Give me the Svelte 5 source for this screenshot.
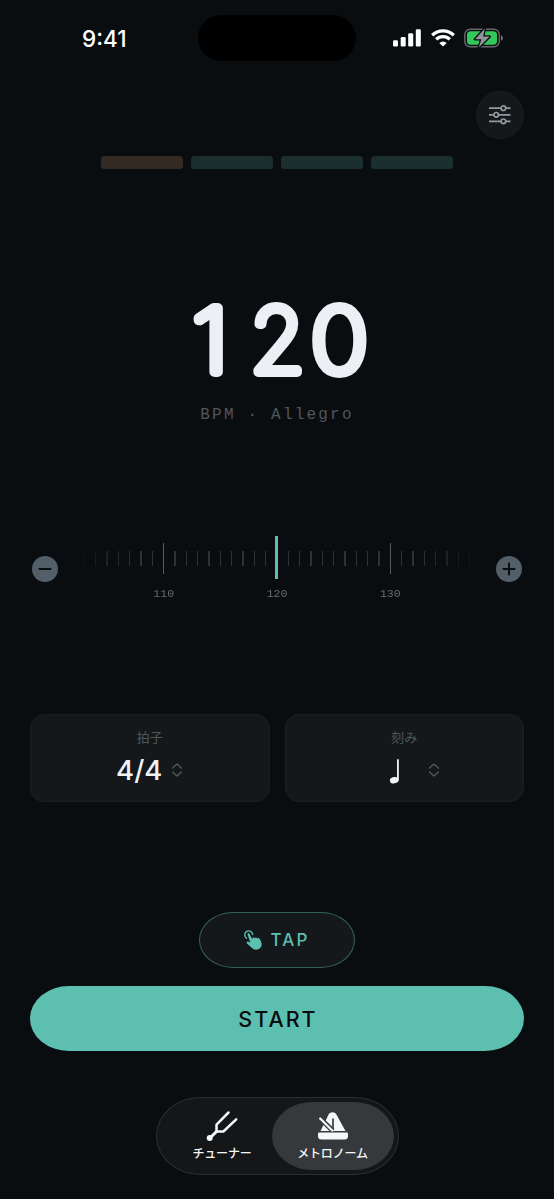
<script lang="ts">
	type TabId = 'tuner' | 'metronome';

	// Metronome state
	let bpm = $state(120);
	let beatsPerBar = $state(4);
	let activeTab = $state<TabId>('metronome');

	const TICK_SPAN = 17;
	const tempoNames = [
		{ max: 60, name: 'Largo' },
		{ max: 76, name: 'Adagio' },
		{ max: 108, name: 'Andante' },
		{ max: 119, name: 'Moderato' },
		{ max: 168, name: 'Allegro' },
		{ max: 400, name: 'Presto' }
	];

	// Digit cells of the tempo readout: left edge and horizontal stretch
	const digitCells = [
		{ x: 12.3, stretch: 1.12 },
		{ x: 70.3, stretch: 1 },
		{ x: 130.8, stretch: 1.1 }
	];

	let tempoName = $derived(tempoNames.find((t) => bpm <= t.max)?.name ?? '');
	let ticks = $derived(Array.from({ length: TICK_SPAN * 2 + 1 }, (_, i) => bpm - TICK_SPAN + i));
	let digits = $derived([...String(bpm).padStart(3, ' ')]);

	function changeBpm(delta: number): void {
		bpm = Math.min(300, Math.max(30, bpm + delta));
	}
</script>

{#snippet chevrons()}
	<svg class="chevrons" viewBox="0 0 12 16" aria-hidden="true">
		<path d="M1.600 6 6 2l4.400 4M1.600 10 6 14l4.400-4" />
	</svg>
{/snippet}

<div class="screen">
	<!-- Status bar -->
	<header class="status-bar">
		<span class="clock">9:41</span>
		<div class="island"></div>
		<div class="status-icons">
			<svg width="28" height="18" viewBox="0 0 28 18" fill="#fff">
				<rect x="0" y="11.200" width="5" height="6.300" rx="1.300" />
				<rect x="7.700" y="8" width="5" height="9.500" rx="1.300" />
				<rect x="15.200" y="4.300" width="5" height="13.200" rx="1.300" />
				<rect x="22.800" y="0.200" width="5" height="17.300" rx="1.300" />
			</svg>
			<svg width="24" height="18" viewBox="0 0 24 18" fill="none" stroke="#fff" stroke-width="3.300">
				<path d="M1.200 6.200a15.400 15.400 0 0 1 21.600 0" />
				<path d="M5.200 10.400a9.700 9.700 0 0 1 13.600 0" />
				<path d="M12 17.500 8.300 13.900a5.300 5.300 0 0 1 7.400 0z" fill="#fff" stroke="none" />
			</svg>
			<svg width="40" height="20" viewBox="0 0 40 20">
				<rect x="0.800" y="1.200" width="34.500" height="17.600" rx="5.500" fill="none" stroke="#66696b" stroke-width="1.400" />
				<path d="M37 7.200c2.500 1 2.500 4.600 0 5.600z" fill="#77797b" />
				<rect x="3" y="3.300" width="30" height="13.400" rx="3.600" fill="#34c759" />
				<path d="M20.800 0.500 11 11.200h6.300L14.800 19.500 25.600 8.600h-6.500z" fill="#919496" stroke="#0a0d10" stroke-width="2.600" paint-order="stroke" stroke-linejoin="round" />
			</svg>
		</div>
	</header>

	<div class="toolbar">
		<button class="settings-btn" aria-label="設定">
			<svg width="24" height="20" viewBox="0 0 24 20" fill="none" stroke="#929a9f" stroke-width="1.700">
				<path d="M1 3.200h12M17.800 3.200h4.700M1 9.800h4.800M10.600 9.800h11.900M1 16.300h12M17.800 16.300h4.700" />
				<circle cx="15.400" cy="3.200" r="2.300" />
				<circle cx="8.200" cy="9.800" r="2.300" />
				<circle cx="15.400" cy="16.300" r="2.300" />
			</svg>
		</button>
	</div>

	<!-- Beat indicator -->
	<div class="beats">
		{#each Array(beatsPerBar) as _, i}
			<div class="beat" class:accent={i === 0}></div>
		{/each}
	</div>

	<!-- Tempo -->
	<section class="tempo">
		<svg class="tempo-value" viewBox="0 0 200 116">
			{#each digits as digit, i}
				<text transform="translate({digitCells[i].x} 90) scale({digitCells[i].stretch} 1)">{digit}</text>
			{/each}
		</svg>
		<p class="tempo-name">BPM · {tempoName}</p>
	</section>

	<!-- Dial -->
	<section class="dial">
		<button class="step-btn" aria-label="−1" onclick={() => changeBpm(-1)}>
			<svg viewBox="0 0 26 26"><path d="M7.500 13h11" /></svg>
		</button>
		<div class="ruler">
			{#each ticks as value}
				<div class="tick" class:major={value % 10 === 0} class:current={value === bpm}>
					<div class="mark"><i></i></div>
					{#if value % 10 === 0}
						<span class="tick-label">{value}</span>
					{/if}
				</div>
			{/each}
		</div>
		<button class="step-btn" aria-label="+1" onclick={() => changeBpm(1)}>
			<svg viewBox="0 0 26 26"><path d="M7.500 13h11M13 7.500v11" /></svg>
		</button>
	</section>

	<!-- Meter and subdivision -->
	<section class="options">
		<button class="option">
			<span class="option-label">拍子</span>
			<span class="option-row">
				<span class="option-value">{beatsPerBar}/4</span>
				{@render chevrons()}
			</span>
		</button>
		<button class="option">
			<span class="option-label">刻み</span>
			<span class="option-row">
				<span class="note">
					<svg width="12" height="26" viewBox="0 0 12 26" fill="#f1f4f6">
						<ellipse cx="5.300" cy="22.200" rx="4.400" ry="3.200" transform="rotate(-10 5.300 22.200)" />
						<rect x="8" y="1.300" width="1.800" height="21" />
					</svg>
				</span>
				{@render chevrons()}
			</span>
		</button>
	</section>

	<!-- Actions -->
	<section class="actions">
		<button class="tap-btn">
			<svg width="18" height="21" viewBox="0 0 18 21" aria-hidden="true">
				<path class="ring" d="M2.500 8.200A4 4 0 1 1 8.700 4.500" />
				<path d="M3.500 4.600c-.5-1.300 1.400-2.100 2-.8l2.600 5.200.5-.2c-.3-1.500 1.300-2 2-.9l.4.700c-.1-1.300 1.500-1.600 2.100-.5l.5.900c0-1.200 1.500-1.300 2-.3l1.500 3.100c1.300 3.300.3 6-2.100 7.100-2.600 1.300-5.400.9-7.300-1.100L3 13.600c-1-1.200.3-2.500 1.600-1.800l1.800.9z" />
			</svg>
			<span>TAP</span>
		</button>
		<button class="start-btn">START</button>
	</section>

	<!-- Tab bar -->
	<nav class="tab-bar">
		<button class="tab" class:active={activeTab === 'tuner'} onclick={() => (activeTab = 'tuner')}>
			<svg width="34" height="32" viewBox="0 0 34 32" fill="none" stroke="#f5f7f8" stroke-width="2.500" stroke-linecap="round" stroke-linejoin="round">
				<path d="M23.500 2.500 11.500 14.700v6.800h6.900L31.200 9.400" />
				<path d="M11.500 21.500 5 28" stroke-width="3" />
				<circle cx="4.700" cy="28" r="2" fill="#f5f7f8" stroke-width="2" />
			</svg>
			<span>チューナー</span>
		</button>
		<button class="tab" class:active={activeTab === 'metronome'} onclick={() => (activeTab = 'metronome')}>
			<svg width="34" height="32" viewBox="0 0 34 32">
				<path d="M4.500 21 12.600 4.500c1.600-3 6.200-3 7.800 0L29.500 21z" fill="#f5f7f8" />
				<path d="M17 9v10.500" stroke="#393c3f" stroke-width="1.700" stroke-linecap="round" />
				<path d="M4.200 8.500 16.500 20.500" stroke="#36393c" stroke-width="5" />
				<path d="m4.200 8.500 12 12" stroke="#f5f7f8" stroke-width="2.300" stroke-linecap="round" />
				<path d="M3.200 22.500h27.600a1.200 1.200 0 0 1 1.200 1.200V26a3.500 3.500 0 0 1-3.500 3.500h-23A3.500 3.500 0 0 1 2 26v-2.300a1.200 1.200 0 0 1 1.200-1.200z" fill="#f5f7f8" />
			</svg>
			<span>メトロノーム</span>
		</button>
	</nav>
</div>

<style>
	:global(body) {
		background: #0a0d10;
	}

	.screen {
		box-sizing: border-box;
		display: flex;
		flex-direction: column;
		height: 1199px;
		padding: 0 30px 24px;
		overflow: hidden;
		background: #0a0d10;
		color: #eff2f5;
		font-family: Inter, 'Noto Sans CJK JP', sans-serif;
	}

	button {
		box-sizing: border-box;
		margin: 0;
		padding: 0;
		border: none;
		background: none;
		color: inherit;
		font: inherit;
		cursor: pointer;
	}

	svg {
		display: block;
		flex: none;
	}

	/* Status bar */
	.status-bar {
		display: grid;
		grid-template-columns: 168px 158px 1fr;
		align-items: center;
		height: 76px;
	}

	.clock {
		padding-left: 52px;
		color: #fff;
		font-size: 22.500px;
		font-weight: 550;
	}

	.island {
		height: 46px;
		border-radius: 23px;
		background: #000;
	}

	.status-icons {
		display: flex;
		align-items: center;
		gap: 9.500px;
		padding-left: 37px;
	}

	/* Toolbar */
	.toolbar {
		display: flex;
		justify-content: flex-end;
		padding-top: 14.500px;
	}

	.settings-btn {
		display: grid;
		place-items: center;
		width: 48px;
		height: 48px;
		border: 1px solid #1a1e21;
		border-radius: 50%;
		background: #14181b;
	}

	/* Beat indicator */
	.beats {
		display: grid;
		grid-auto-flow: column;
		grid-auto-columns: 1fr;
		gap: 7.600px;
		width: 352.500px;
		margin: 17.500px auto 0;
	}

	.beat {
		height: 12.500px;
		border-radius: 3.500px;
		background: #1b302e;
	}

	.beat.accent {
		background: #332b23;
	}

	/* Tempo */
	.tempo {
		display: flex;
		flex-direction: column;
		align-items: center;
		height: 163px;
		margin-top: 113.500px;
	}

	.tempo-value {
		width: 200px;
		height: 116px;
		margin-left: 6px;
	}

	.tempo-value text {
		font-size: 88px;
		font-weight: 100;
		fill: #eceff3;
		stroke: #eceff3;
		stroke-width: 10px;
		stroke-linejoin: round;
		stroke-linecap: round;
	}

	.tempo-name {
		margin: 7px 0 0;
		color: #4f565c;
		font-family: 'Liberation Mono', monospace;
		font-size: 16px;
		line-height: 20px;
		letter-spacing: 2.200px;
		white-space: pre;
	}

	/* Dial */
	.dial {
		display: flex;
		align-items: center;
		justify-content: space-between;
		height: 66px;
		margin-top: 90.500px;
		padding: 0 2px;
	}

	.step-btn svg {
		width: 26px;
		height: 26px;
		border-radius: 50%;
		background: #525e68;
		fill: none;
		stroke: #0a0d10;
		stroke-width: 2;
		stroke-linecap: round;
	}

	.ruler {
		display: grid;
		grid-auto-flow: column;
		grid-auto-columns: 11.330px;
		height: 66px;
		mask-image: linear-gradient(90deg, transparent -2%, #000 14%, #000 86%, transparent 102%);
	}

	.tick {
		display: flex;
		flex-direction: column;
		align-items: center;
	}

	.mark {
		display: flex;
		align-items: center;
		height: 44px;
	}

	.mark i {
		width: 1.200px;
		height: 15px;
		margin-top: 2px;
		background: #2d3236;
	}

	.major .mark i {
		height: 31px;
		background: #535a60;
	}

	.current .mark i {
		width: 3px;
		height: 43px;
		margin-top: 0;
		background: #5dbfb0;
	}

	.tick-label {
		margin-top: 7px;
		color: #656b71;
		font-family: 'Liberation Mono', monospace;
		font-size: 11.500px;
		line-height: 14px;
	}

	/* Options */
	.options {
		display: grid;
		grid-template-columns: 1fr 1fr;
		gap: 15px;
		margin-top: 112px;
	}

	.option {
		display: flex;
		flex-direction: column;
		align-items: center;
		height: 88px;
		padding-top: 13px;
		border: 1px solid #1b1f22;
		border-radius: 14px;
		background: #14181b;
	}

	.option-label {
		color: #4f565c;
		font-family: 'Noto Sans CJK JP', sans-serif;
		font-size: 13px;
		line-height: 18px;
	}

	.option-row {
		display: flex;
		align-items: center;
		gap: 9px;
		height: 34px;
		margin-top: 7px;
	}

	.option-value {
		font-size: 27.500px;
		font-weight: 550;
		line-height: 34px;
	}

	.note {
		display: flex;
		justify-content: center;
		width: 48px;
		padding: 2px 0 0 2px;
	}

	.chevrons {
		width: 12px;
		height: 16px;
		fill: none;
		stroke: #535a60;
		stroke-width: 1.300;
		stroke-linecap: round;
		stroke-linejoin: round;
	}

	/* Actions */
	.actions {
		display: flex;
		flex-direction: column;
		align-items: center;
		gap: 18px;
		margin-top: 110px;
	}

	.tap-btn {
		display: flex;
		align-items: center;
		justify-content: center;
		gap: 8px;
		width: 156px;
		height: 56px;
		padding-top: 1px;
		border: 1.500px solid #33625c;
		border-radius: 34px / 28px;
		background: #14181b;
		color: #5dbfb0;
		font-size: 17px;
		font-weight: 550;
		letter-spacing: 2.200px;
	}

	.tap-btn svg {
		fill: #5dbfb0;
	}

	.tap-btn .ring {
		fill: none;
		stroke: #5dbfb0;
		stroke-width: 1.400;
		stroke-linecap: round;
	}

	.start-btn {
		width: 100%;
		height: 65px;
		padding: 1px 0 0 2px;
		border-radius: 39px / 32.500px;
		background: #5dbfb0;
		color: #0a0d10;
		font-size: 21.500px;
		font-weight: 550;
		letter-spacing: 2px;
	}

	/* Tab bar */
	.tab-bar {
		display: grid;
		grid-template-columns: 115px 122px;
		align-self: center;
		box-sizing: border-box;
		width: 243px;
		height: 78px;
		margin-top: auto;
		padding: 4px 0;
		border: 1px solid #2c2f31;
		border-radius: 44px / 39px;
		background: #141618;
	}

	.tab {
		display: flex;
		flex-direction: column;
		align-items: center;
		padding-top: 8px;
		border-radius: 40px / 34px;
		color: #f5f7f8;
		font-family: 'Noto Sans CJK JP', sans-serif;
		font-size: 12px;
		font-weight: 500;
		line-height: 18px;
		white-space: nowrap;
	}

	.tab:first-child {
		padding-left: 16px;
	}

	.tab span {
		margin-top: 2px;
		letter-spacing: -0.200px;
	}

	.tab.active {
		background: #36393c;
	}
</style>
